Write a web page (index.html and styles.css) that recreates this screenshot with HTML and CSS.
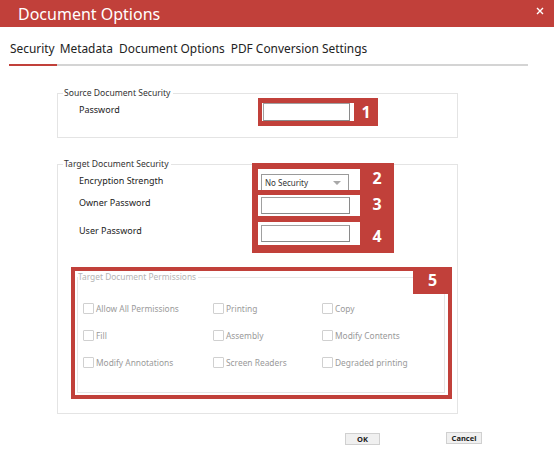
FILE: index.html
```
<!DOCTYPE html>
<html>
<head>
    <link rel="stylesheet" href="styles.css">
</head>

<body>
    <div class="titlebar">
        <span class="title">Document Options</span>
        <svg class="close" width="8" height="8" viewBox="0 0 8 8">
            <path d="M1 1 L7 7 M7 1 L1 7" stroke="#fff" stroke-width="1.4"/>
        </svg>
    </div>

    <div class="tabs">
        <span class="tab active">Security</span>
        <span class="tab">Metadata</span>
        <span class="tab">Document Options</span>
        <span class="tab">PDF Conversion Settings</span>
    </div>

    <div class="content">
        <fieldset class="group source">
            <legend>Source Document Security</legend>
            <div class="row">
                <label class="label">Password</label>
                <div class="mark mark-one">
                    <div class="cell"><div class="textbox"></div></div>
                    <span class="num">1</span>
                </div>
            </div>
        </fieldset>

        <fieldset class="group target">
            <legend>Target Document Security</legend>
            <div class="row">
                <div class="labels">
                    <label class="label enc">Encryption Strength</label>
                    <label class="label owner">Owner Password</label>
                    <label class="label user">User Password</label>
                </div>
                <div class="mark mark-multi">
                    <div class="mark-row r1">
                        <div class="cell">
                            <div class="select">
                                <span>No Security</span>
                                <span class="arrow"></span>
                            </div>
                        </div>
                        <span class="num">2</span>
                    </div>
                    <div class="mark-row r2">
                        <div class="cell"><div class="textbox"></div></div>
                        <span class="num">3</span>
                    </div>
                    <div class="mark-row r3">
                        <div class="cell"><div class="textbox"></div></div>
                        <span class="num">4</span>
                    </div>
                </div>
            </div>

            <div class="perm-mark">
                <fieldset class="perms">
                    <legend>Target Document Permissions</legend>
                    <div class="perm-grid">
                        <label class="check"><span class="box"></span>Allow All Permissions</label>
                        <label class="check"><span class="box"></span>Printing</label>
                        <label class="check"><span class="box"></span>Copy</label>
                        <label class="check"><span class="box"></span>Fill</label>
                        <label class="check"><span class="box"></span>Assembly</label>
                        <label class="check"><span class="box"></span>Modify Contents</label>
                        <label class="check"><span class="box"></span>Modify Annotations</label>
                        <label class="check"><span class="box"></span>Screen Readers</label>
                        <label class="check"><span class="box"></span>Degraded printing</label>
                    </div>
                </fieldset>
                <span class="tag">5</span>
            </div>
        </fieldset>

        <div class="buttons">
            <button class="btn ok">OK</button>
            <button class="btn cancel">Cancel</button>
        </div>
    </div>
</body>
</html>
```

FILE: styles.css
```
body {
    margin: 0;
    width: 554px;
    height: 459px;
    overflow: hidden;
    background: #fff;
    font-family: "Noto Sans", "Open Sans", sans-serif;
    color: #222;
}

.titlebar {
    height: 27px;
    background: #c1403a;
    display: flex;
    align-items: center;
    justify-content: space-between;
    padding: 0 10px 0 18px;
    box-sizing: border-box;
}

.title {
    color: #fff;
    font-size: 16px;
    line-height: 20px;
    margin-top: 1px;
}

.close {
    align-self: flex-start;
    margin-top: 7px;
}

.tabs {
    display: flex;
    margin-left: 9px;
    width: 519px;
    border-bottom: 2px solid #d4d4d4;
}

.tab {
    font-size: 11.9px;
    line-height: 18px;
    padding: 12px 3px 7px 3px;
    color: #222;
}

.tab.active {
    padding-left: 1px;
    padding-right: 2px;
    border-bottom: 2px solid #c1403a;
    margin-bottom: -2px;
}

.content {
    padding-left: 57px;
}

.group {
    margin: 0;
    width: 401px;
    box-sizing: border-box;
    border: 1px solid #e4e4e4;
    padding: 0 0 0 13px;
}

.group legend {
    font-size: 8.6px;
    line-height: 10px;
    padding: 0 2px 0 1px;
    margin-left: -8px;
    color: #333;
}

.source {
    margin-top: 22px;
    padding-bottom: 11px;
}

.target {
    margin-top: 21px;
    padding-bottom: 14px;
}

.row {
    display: flex;
}

.label {
    font-size: 9px;
    line-height: 14px;
    color: #222;
}

.source .label {
    width: 179px;
    margin-left: 8px;
    margin-top: 5px;
}

.mark {
    background: #c1403a;
    display: flex;
}

.mark-one {
    width: 120px;
    height: 28px;
    padding: 5px 0 5px 4px;
    box-sizing: border-box;
}

.mark-one .cell {
    width: 91px;
    background: #fff;
    padding: 0 0 0 1px;
}

.mark-one .textbox {
    width: 87px;
    height: 18px;
}

.num {
    flex: 1;
    color: #fff;
    font-weight: bold;
    font-size: 16px;
    text-align: center;
    line-height: 18px;
}

.textbox {
    box-sizing: border-box;
    border: 1px solid #8a8a8a;
    border-top-color: #a0a0a0;
    border-left-color: #a0a0a0;
    background: #fff;
}

.labels {
    width: 173px;
    margin-left: 8px;
    display: flex;
    flex-direction: column;
}

.enc {
    margin-top: 5px;
}

.owner {
    margin-top: 8px;
}

.user {
    margin-top: 14px;
}

.mark-multi {
    flex-direction: column;
    width: 142px;
    margin-top: -6px;
    padding: 6px 0 8px 6px;
    box-sizing: border-box;
    gap: 5px;
}

.mark-row {
    display: flex;
}

.mark-row .cell {
    width: 102px;
    background: #fff;
    padding-left: 3px;
    box-sizing: border-box;
}

.r1 .cell {
    height: 21px;
    padding-top: 5px;
}

.r2 .cell {
    height: 21px;
    padding-top: 2px;
}

.r3 {
    margin-top: 1px;
}

.r3 .cell {
    height: 23px;
    padding-top: 3px;
}

.r3 .num {
    line-height: 23px;
    height: 23px;
    padding-top: 3px;
    box-sizing: border-box;
}

.mark-row .textbox {
    width: 89px;
    height: 17px;
}

.select {
    width: 88px;
    height: 16px;
    box-sizing: border-box;
    border: 1px solid #9a9a9a;
    border-bottom: none;
    display: flex;
    align-items: center;
    justify-content: space-between;
    padding: 0 7px 0 3px;
    font-size: 8px;
    color: #333;
}

.arrow {
    width: 0;
    height: 0;
    border-left: 4px solid transparent;
    border-right: 4px solid transparent;
    border-top: 4px solid #a8a8a8;
}

.perm-mark {
    position: relative;
    margin-top: 14px;
    margin-left: 0;
    width: 381px;
    height: 132px;
    box-sizing: border-box;
    border: 4px solid #c1403a;
}

.perms {
    margin: 1px 3px 2px 2px;
    border: 1px solid #e6e6e6;
    padding: 19px 0 0 5px;
    height: 121px;
    box-sizing: border-box;
}

.perms legend {
    font-size: 8.4px;
    line-height: 10px;
    color: #b4b4b4;
    padding: 0 2px 0 0;
    margin-left: -5px;
}

.perm-grid {
    display: grid;
    grid-template-columns: 130px 109px 1fr;
    row-gap: 13px;
}

.check {
    display: flex;
    align-items: center;
    height: 14px;
    font-size: 8.4px;
    color: #9a9a9a;
}

.box {
    width: 9px;
    height: 9px;
    border: 1px solid #d0d0d0;
    border-radius: 1px;
    margin-right: 2px;
    background: #fff;
}

.tag {
    position: absolute;
    top: -4px;
    right: -4px;
    width: 39px;
    height: 27px;
    background: #c1403a;
    color: #fff;
    font-weight: bold;
    font-size: 16px;
    line-height: 26px;
    text-align: center;
}

.buttons {
    display: flex;
    margin-top: 19px;
    padding-left: 288px;
    gap: 66px;
    align-items: flex-start;
}

.btn {
    font-family: "Noto Sans", sans-serif;
    font-size: 7.5px;
    font-weight: bold;
    color: #222;
    background: #f0f0f0;
    border: 1px solid #d0d0d0;
    padding: 0;
    height: 12px;
    line-height: 10px;
}

.ok {
    width: 35px;
}

.cancel {
    width: 36px;
    margin-top: -1px;
}
```
